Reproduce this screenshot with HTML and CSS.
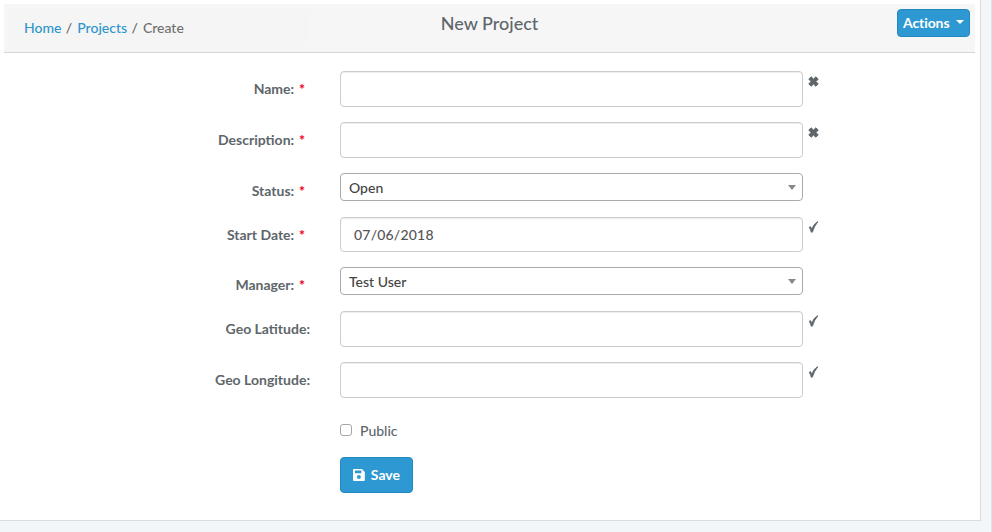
FILE: index.html
```html
<!DOCTYPE html>
<html lang="en">
<head>
<meta charset="utf-8">
<title>New Project</title>
<link rel="stylesheet" href="styles.css">
</head>
<body>
<svg class="symbols" aria-hidden="true">
  <symbol id="cross" viewBox="0 0 11 11"><path d="M3.1 .8 5.5 3.1 7.9 .8 10.2 3.1 8 5.5 10.2 7.9 7.9 10.2 5.5 8 3.1 10.2 .8 7.9 3 5.5 .8 3.1z" stroke-width="1" stroke-linejoin="round"/></symbol>
  <symbol id="check" viewBox="0 0 11 12"><path d="M1.2 6.2 2.5 5.6Q3.3 6.8 3.7 8.2 5.5 3.2 9.4 .6L9.8 .9Q6.2 5 4.5 11.1L3.2 11.3Q2.6 8.6 1.2 6.2z" stroke-width=".7" stroke-linejoin="round"/></symbol>
</svg>
<main class="panel">
  <header class="bar">
    <nav class="crumbs"><a href="#">Home</a><span class="sep">/</span><a href="#">Projects</a><span class="sep">/</span><span class="current">Create</span></nav>
    <h1 class="title">New Project</h1>
    <div class="tools"><button class="btn actions" type="button">Actions<i class="caret"></i></button></div>
  </header>
  <form class="form">
    <div class="row"><label class="label" for="name">Name: <b class="req">*</b></label><input class="input" id="name"><svg class="mark"><use href="#cross"/></svg></div>
    <div class="row"><label class="label" for="desc">Description: <b class="req">*</b></label><input class="input" id="desc"><svg class="mark"><use href="#cross"/></svg></div>
    <div class="row row-select"><span class="label">Status: <b class="req">*</b></span><div class="select"><span>Open</span><i class="arrow"></i></div></div>
    <div class="row row-date"><label class="label" for="date">Start Date: <b class="req">*</b></label><input class="input" id="date" value="07/06/2018"><svg class="mark check"><use href="#check"/></svg></div>
    <div class="row row-select"><span class="label">Manager: <b class="req">*</b></span><div class="select"><span>Test User</span><i class="arrow"></i></div></div>
    <div class="row"><label class="label" for="lat">Geo Latitude:</label><input class="input" id="lat"><svg class="mark check"><use href="#check"/></svg></div>
    <div class="row"><label class="label" for="lon">Geo Longitude:</label><input class="input" id="lon"><svg class="mark check"><use href="#check"/></svg></div>
    <label class="public"><input class="box" type="checkbox"><span>Public</span></label>
    <button class="btn save" type="button"><svg class="disk" viewBox="0 0 12 12"><path fill-rule="evenodd" d="M1 0H9L12 3V11Q12 12 11 12H1Q0 12 0 11V1Q0 0 1 0zM2 1.5V4.2H8.5V1.5zM6 6A2 2 0 1 0 6 10 2 2 0 1 0 6 6z"/></svg><span>Save</span></button>
  </form>
</main>
</body>
</html>
```
FILE: styles.css
```css
* { box-sizing: border-box; }
body {
  margin: 0;
  height: 532px;
  overflow: hidden;
  background: #f3f6f9;
  border-right: 1px solid #e0e3e6;
  color: #5e666b;
  font: 500 14px/20px Lato, "Liberation Sans", sans-serif;
}
.symbols { display: none; }
.panel {
  width: 981px;
  height: 521px;
  padding: 4px 5px 0 4px;
  background: #fff;
  border-right: 1px solid #dadcde;
  border-bottom: 1px solid #dadcde;
}
.bar {
  display: grid;
  grid-template-columns: 324px 323px 1fr;
  height: 49px;
  background: #f6f6f6;
  border-bottom: 1px solid #d6d6d6;
  border-radius: 3px 3px 0 0;
}
.crumbs {
  display: flex;
  width: 300px;
  height: 37px;
  margin: 5px 0 0 5px;
  padding: 9px 0 0 15px;
  background: #f5f5f5;
  border-radius: 4px;
}
.crumbs a { color: #2d96cd; text-decoration: none; }
.sep { padding: 0 5px 0 4.4px; }
.current { color: #707070; }
.title {
  margin: 9px 0 0;
  font-size: 18px;
  line-height: 20px;
  font-weight: 500;
  text-align: center;
}
.tools { display: flex; justify-content: flex-end; padding: 5px 5px 0 0; }
.btn {
  display: flex;
  align-items: center;
  background: #2d98d1;
  border: 1px solid #2189bf;
  border-radius: 4px;
  color: #fff;
  font: 700 14px/20px Lato, sans-serif;
}
.actions { width: 73px; height: 28px; padding: 0 5px; letter-spacing: -.1px; }
.caret {
  margin: -3px 0 0 7px;
  border: 4px solid transparent;
  border-top-color: #fff;
  border-bottom: 0;
}
.form {
  display: flex;
  flex-direction: column;
  padding: 18px 0 0 30px;
}
.row {
  display: grid;
  grid-template-columns: 276px 463px 11px;
  column-gap: 30px;
  height: 36px;
  margin-bottom: 15px;
}
.row-select { height: 28px; margin-bottom: 16px; }
.row-date { height: 35px; margin-bottom: 15px; }
.label { padding-top: 8px; font-weight: 700; text-align: right; white-space: pre; }
.req { padding: 0 5px 0 1.5px; color: #f00020; }
.input {
  width: 100%;
  height: 100%;
  padding: 0 13px;
  border: 1px solid #ccc;
  border-radius: 4px;
  background: #fff;
  box-shadow: inset 0 1px 1px rgba(0, 0, 0, .075);
  color: #555;
  font: 500 14px/20px Lato, sans-serif;
  letter-spacing: .2px;
}
.mark {
  width: 11px;
  height: 11px;
  margin: 5px 0 0 -25px;
  fill: #5e666b;
  stroke: #5e666b;
  stroke-width: 0;
}
.check { height: 12px; margin-top: 4px; }
.select {
  display: flex;
  align-items: center;
  justify-content: space-between;
  padding: 1px 6px 0 8px;
  border: 1px solid #aaa;
  border-radius: 4px;
  color: #444;
}
.arrow {
  border: 4px solid transparent;
  border-top: 5px solid #888;
  border-bottom: 0;
}
.public { display: flex; align-items: center; height: 20px; margin: 8px 0 0 306px; }
.box {
  appearance: none;
  width: 12px;
  height: 12px;
  margin: -3px 8px 0 0;
  border: 1px solid #a5a5a5;
  border-radius: 3px;
  background: #fff;
}
.save { width: 73px; height: 36px; margin: 16px 0 0 306px; padding: 0 12px; }
.disk { width: 12px; height: 12px; margin-right: 6px; fill: #fff; }
```
